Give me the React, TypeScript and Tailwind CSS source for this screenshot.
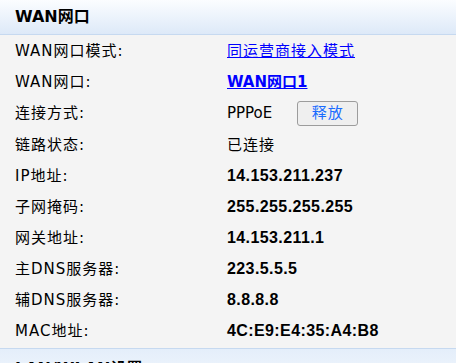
const rows: { label: string; value: string }[] = [
  { label: 'IP地址:', value: '14.153.211.237' },
  { label: '子网掩码:', value: '255.255.255.255' },
  { label: '网关地址:', value: '14.153.211.1' },
  { label: '主DNS服务器:', value: '223.5.5.5' },
  { label: '辅DNS服务器:', value: '8.8.8.8' },
  { label: 'MAC地址:', value: '4C:E9:E4:35:A4:B8' },
]

function Row({ label, children }: { label: string; children: React.ReactNode }) {
  return (
    <div className="flex items-center h-[31.1px]">
      <div className="w-[227px] pl-[15px] shrink-0">{label}</div>
      <div className="flex items-center">{children}</div>
    </div>
  )
}

export default function App() {
  return (
    <div
      className="w-[456px] h-[363px] overflow-hidden bg-[#f4f4f4] text-black text-[15px] tracking-[1px]"
      style={{ fontFamily: '"DejaVu Sans", "Noto Sans CJK SC", sans-serif' }}
    >
      {/* Section header */}
      <div className="h-[35px] border-b border-[#c6d9f0] bg-gradient-to-b from-[#fbfdff] to-[#dde9f8] flex items-center pl-[15px]">
        <span className="font-bold text-[16px] tracking-normal">WAN网口</span>
      </div>

      <div className="pt-[1px]">
        <Row label="WAN网口模式:">
          <a href="#" className="text-[#0000ff] underline">
            同运营商接入模式
          </a>
        </Row>
        <Row label="WAN网口:">
          <a href="#" className="text-[#0000ff] underline font-bold tracking-normal">
            WAN网口1
          </a>
        </Row>
        <Row label="连接方式:">
          <span className="tracking-normal">PPPoE</span>
          <button className="ml-[25px] w-[61px] h-[25px] rounded-[3px] border border-[#9c9c9c] bg-[#efefef] text-[#1a6cff] flex items-center justify-center">
            释放
          </button>
        </Row>
        <Row label="链路状态:">
          <span>已连接</span>
        </Row>
        {rows.map((r) => (
          <Row key={r.label} label={r.label}>
            <span
              className="font-bold text-[16px] tracking-[0.4px]"
              style={{ fontFamily: '"Liberation Sans", sans-serif' }}
            >
              {r.value}
            </span>
          </Row>
        ))}
      </div>

      {/* Next section header */}
      <div className="mt-[1px] h-[40px] border-t border-[#c6d9f0] bg-gradient-to-b from-[#e4eefa] to-[#f4f8fd] pl-[15px] pt-[8px]">
        <span className="font-bold text-[16px] tracking-normal">LAN/WLAN设置</span>
      </div>
    </div>
  )
}
